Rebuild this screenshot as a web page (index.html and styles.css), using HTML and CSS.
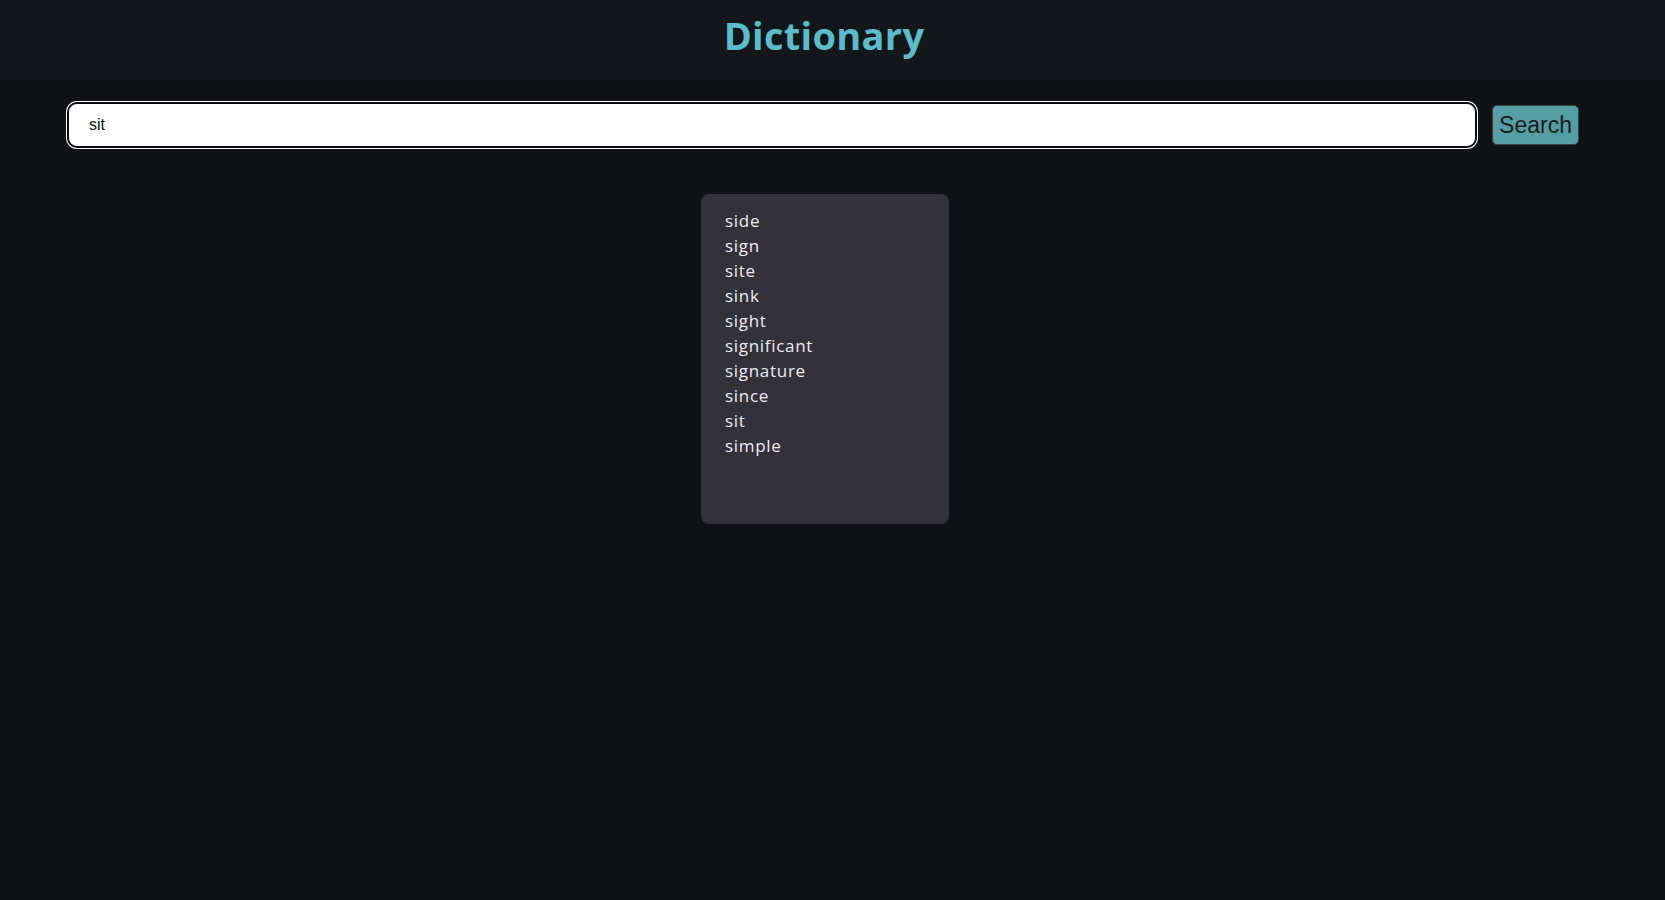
FILE: index.html
```html
<!DOCTYPE html>
<html lang="en">
<head>
<meta charset="utf-8">
<title>Dictionary</title>
<link rel="stylesheet" href="styles.css">
</head>
<body>
<header class="header">
  <h1 class="title">Dictionary</h1>
</header>
<main class="main">
  <form class="search">
    <input class="search-input" type="text" value="sit">
    <button class="search-btn" type="button">Search</button>
  </form>
  <ul class="suggestions">
    <li>side</li>
    <li>sign</li>
    <li>site</li>
    <li>sink</li>
    <li>sight</li>
    <li>significant</li>
    <li>signature</li>
    <li>since</li>
    <li>sit</li>
    <li>simple</li>
  </ul>
</main>
</body>
</html>
```
FILE: styles.css
```css
* { box-sizing: border-box; }
html, body {
  margin: 0;
  padding: 0;
  background: #111216;
  height: 100%;
}
body {
  font-family: "Open Sans", "Noto Sans", sans-serif;
  color: #ececf2;
}
.header {
  background: #13161b;
  height: 80px;
  display: flex;
  justify-content: center;
  align-items: flex-start;
  padding-right: 17px;
}
.title {
  margin: 10px 0 0;
  font-family: "Open Sans", "Noto Sans", sans-serif;
  font-weight: 700;
  font-size: 38px;
  line-height: 50px;
  color: #5bbdc9;
  letter-spacing: 0.3px;
}
.main {
  display: flex;
  flex-direction: column;
  align-items: center;
}
.search {
  width: 100%;
  display: flex;
  align-items: center;
  padding: 22px 86px 0 67px;
  gap: 15px;
}
.search-input {
  flex: 1;
  height: 46px;
  border: 2px solid #0c0c0e;
  border-radius: 10px;
  box-shadow: 0 0 0 1px #ffffff;
  background: #ffffff;
  padding: 0 0 0 20px;
  font-family: "Liberation Sans", Arial, sans-serif;
  font-size: 16px;
  color: #111;
  outline: none;
}
.search-btn {
  width: 87px;
  height: 40px;
  background: #549ea4;
  border: 1px solid #3e3f43;
  border-radius: 5px;
  font-family: "Liberation Sans", Arial, sans-serif;
  font-size: 23px;
  color: #1a1d1f;
  padding: 0;
}
.suggestions {
  list-style: none;
  margin: 46px 15px 0 0;
  padding: 14px 24px 0;
  width: 248px;
  height: 330px;
  background: #33323b;
  border-radius: 8px;
}
.suggestions li {
  font-size: 17px;
  line-height: 25px;
  letter-spacing: 0.7px;
  color: #ececf2;
}
```
